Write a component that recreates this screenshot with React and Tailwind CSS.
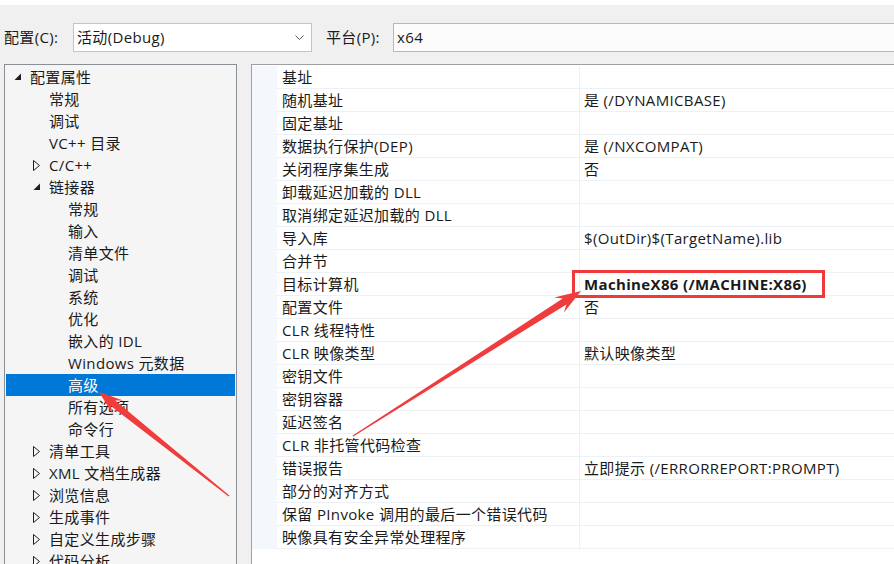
import React from "react";

const FONT = { fontFamily: '"Open Sans", "Noto Sans CJK SC", sans-serif' };

const tree = [
  { t: "配置属性", l: 0, e: "open" },
  { t: "常规", l: 1 },
  { t: "调试", l: 1 },
  { t: "VC++ 目录", l: 1 },
  { t: "C/C++", l: 1, e: "closed" },
  { t: "链接器", l: 1, e: "open" },
  { t: "常规", l: 2 },
  { t: "输入", l: 2 },
  { t: "清单文件", l: 2 },
  { t: "调试", l: 2 },
  { t: "系统", l: 2 },
  { t: "优化", l: 2 },
  { t: "嵌入的 IDL", l: 2 },
  { t: "Windows 元数据", l: 2 },
  { t: "高级", l: 2, sel: true },
  { t: "所有选项", l: 2 },
  { t: "命令行", l: 2 },
  { t: "清单工具", l: 1, e: "closed" },
  { t: "XML 文档生成器", l: 1, e: "closed" },
  { t: "浏览信息", l: 1, e: "closed" },
  { t: "生成事件", l: 1, e: "closed" },
  { t: "自定义生成步骤", l: 1, e: "closed" },
  { t: "代码分析", l: 1, e: "closed" },
];

const props = [
  ["基址", ""],
  ["随机基址", "是 (/DYNAMICBASE)"],
  ["固定基址", ""],
  ["数据执行保护(DEP)", "是 (/NXCOMPAT)"],
  ["关闭程序集生成", "否"],
  ["卸载延迟加载的 DLL", ""],
  ["取消绑定延迟加载的 DLL", ""],
  ["导入库", "$(OutDir)$(TargetName).lib"],
  ["合并节", ""],
  ["目标计算机", "MachineX86 (/MACHINE:X86)", true],
  ["配置文件", "否"],
  ["CLR 线程特性", ""],
  ["CLR 映像类型", "默认映像类型"],
  ["密钥文件", ""],
  ["密钥容器", ""],
  ["延迟签名", ""],
  ["CLR 非托管代码检查", ""],
  ["错误报告", "立即提示 (/ERRORREPORT:PROMPT)"],
  ["部分的对齐方式", ""],
  ["保留 PInvoke 调用的最后一个错误代码", ""],
  ["映像具有安全异常处理程序", ""],
];

function Expander({ e, sel }) {
  if (e === "open")
    return (
      <svg width="8" height="8" viewBox="0 0 8 8" className="mt-[-1px]">
        <polygon points="7,0.5 7,7 0.5,7" fill={sel ? "#fff" : "#1e1e1e"} />
      </svg>
    );
  if (e === "closed")
    return (
      <svg width="8" height="11" viewBox="0 0 8 11">
        <polygon points="0.5,0.5 6.5,5.5 0.5,10.5" fill="none" stroke="#1e1e1e" strokeWidth="1" />
      </svg>
    );
  return null;
}

function arrowPoints(tx, ty, px, py, headLen, headW, neckW) {
  const dx = px - tx, dy = py - ty;
  const len = Math.hypot(dx, dy);
  const ux = dx / len, uy = dy / len;
  const nx = -uy, ny = ux;
  const nkx = px - ux * headLen * 0.75, nky = py - uy * headLen * 0.75;
  const bx = px - ux * headLen, by = py - uy * headLen;
  const pts = [
    [tx - nx * 0.6, ty - ny * 0.6],
    [nkx - nx * neckW / 2, nky - ny * neckW / 2],
    [bx - nx * headW / 2, by - ny * headW / 2],
    [px, py],
    [bx + nx * headW / 2, by + ny * headW / 2],
    [nkx + nx * neckW / 2, nky + ny * neckW / 2],
    [tx + nx * 0.6, ty + ny * 0.6],
  ];
  return pts.map((p) => p.map((v) => v.toFixed(1)).join(",")).join(" ");
}

export default function App() {
  return (
    <div className="relative w-[894px] h-[564px] overflow-hidden bg-[#f0f0f0] text-[15px] tracking-[0.35px] text-[#1a1a1a]" style={FONT}>
      <div className="h-[5px] bg-white" />
      {/* toolbar */}
      <div className="flex items-start h-[59px] pt-[18px]">
        <div className="shrink-0 w-[73px] pl-[4px] h-[29px] flex items-center">配置(C):</div>
        <div className="shrink-0 w-[239px] h-[29px] bg-white border border-[#c4c4c4] flex items-center pl-[3px] pr-[7px]">
          <span className="flex-1">活动(Debug)</span>
          <svg width="9" height="6" viewBox="0 0 9 6">
            <polyline points="0.5,0.5 4.5,4.5 8.5,0.5" fill="none" stroke="#555" strokeWidth="1" />
          </svg>
        </div>
        <div className="shrink-0 w-[81px] pl-[14px] h-[29px] flex items-center">平台(P):</div>
        <div className="shrink-0 w-[520px] h-[29px] bg-[#fcfcfc] border border-[#b8b8b8] flex items-center pl-[3px]">x64</div>
      </div>
      {/* panels */}
      <div className="flex items-start">
        <div className="shrink-0 ml-[4px] w-[233px] h-[520px] border border-[#8a8f96] bg-[#f5f5f5] pt-[1px] px-[1px]">
          {tree.map((r, i) => (
            <div
              key={i}
              className={r.sel ? "h-[22px] flex items-center bg-[#0078d7] text-white" : "h-[22px] flex items-center"}
            >
              <div className={r.l === 0 ? "w-[8px]" : r.l === 1 ? "w-[27px]" : "w-[46px]"} />
              <div className="w-[16px] flex items-center">
                <Expander e={r.e} sel={r.sel} />
              </div>
              <span className="whitespace-nowrap">{r.t}</span>
            </div>
          ))}
        </div>
        <div className="ml-[14px] flex-1 h-[520px] border-l border-t border-[#a0a0a0] bg-white pt-[1px]">
          <div className="flex">
            <div className="w-[25px] bg-[#f4f7fc]" />
            <div className="flex-1">
              {props.map((p, i) => (
                <div key={i} className="flex h-[23px] border-b border-[#edf0f5]">
                  <div className="shrink-0 w-[303px] border-r border-[#edf0f5] pl-[5px] flex items-center whitespace-nowrap">{p[0]}</div>
                  <div className={p[2] ? "flex-1 pl-[4px] flex items-center whitespace-nowrap font-bold" : "flex-1 pl-[4px] flex items-center whitespace-nowrap"}>
                    {p[1]}
                  </div>
                </div>
              ))}
            </div>
          </div>
        </div>
      </div>
      {/* annotations */}
      <div className="absolute left-[572px] top-[270px] w-[253px] h-[28px] border-[3px] border-[#ee3a3a]" />
      <svg className="absolute left-0 top-0 pointer-events-none" width="894" height="564">
        <polygon points={arrowPoints(229, 496, 99, 392, 24, 17, 7)} fill="#f03c3c" />
        <polygon points={arrowPoints(353, 436, 581, 291, 26, 18, 7)} fill="#f03c3c" />
      </svg>
    </div>
  );
}
